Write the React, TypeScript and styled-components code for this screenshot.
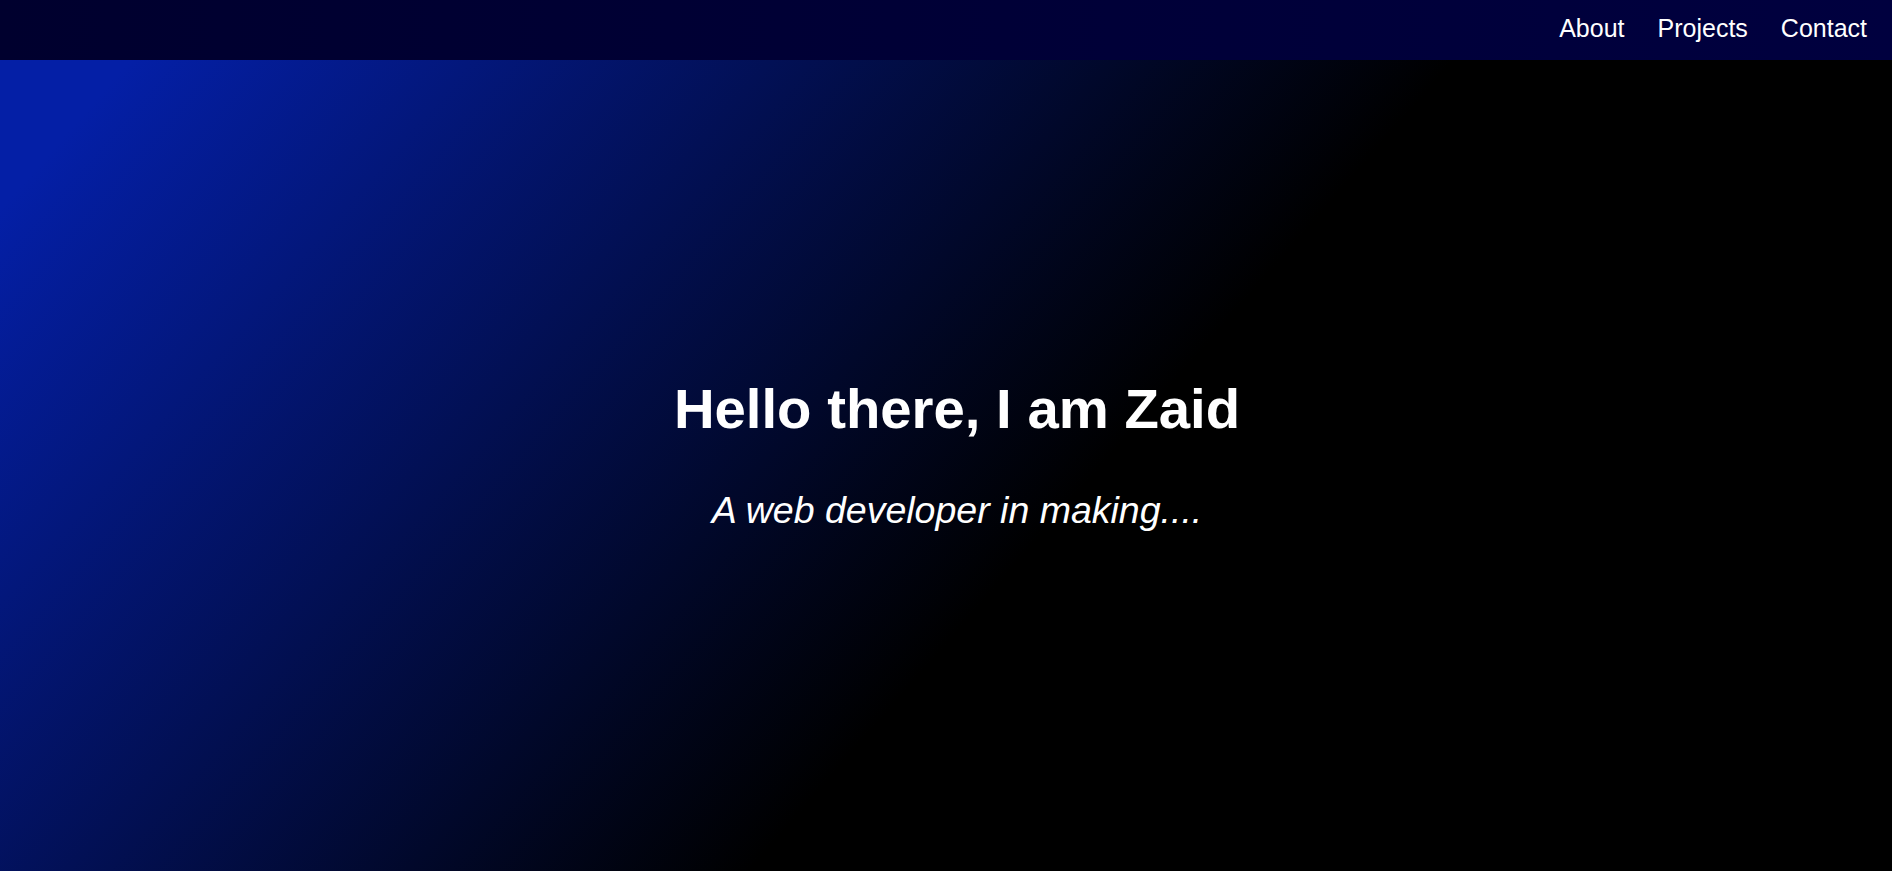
import React from "react";
import styled, { createGlobalStyle } from "styled-components";

const GlobalStyle = createGlobalStyle`
  html, body {
    margin: 0;
    padding: 0;
    height: 100%;
    background: #000;
  }
  body {
    font-family: "Liberation Sans", Arial, sans-serif;
    color: #fff;
  }
  #root {
    min-height: 100vh;
  }
`;

const Page = styled.div`
  display: flex;
  flex-direction: column;
  min-height: 100vh;
`;

const NavBar = styled.nav`
  display: flex;
  justify-content: flex-end;
  align-items: center;
  height: 60px;
  padding: 0 25px 4px 0;
  background: linear-gradient(to right, #00002e, #00003f);
  box-sizing: border-box;
  flex-shrink: 0;
`;

const NavList = styled.ul`
  display: flex;
  gap: 33px;
  list-style: none;
  margin: 0;
  padding: 0;
`;

const NavLink = styled.a`
  font-size: 25px;
  color: #fff;
  text-decoration: none;
  cursor: pointer;
`;

const Hero = styled.main`
  flex: 1;
  display: flex;
  flex-direction: column;
  align-items: center;
  justify-content: center;
  padding: 0 0 24px 22px;
  background: linear-gradient(131deg, #041fa6 5%, #000 56%);
`;

const Title = styled.h1`
  margin: 0;
  font-size: 56.3px;
  font-weight: 700;
  line-height: normal;
`;

const Subtitle = styled.p`
  margin: 48px 0 0;
  font-size: 37.5px;
  font-style: italic;
  line-height: normal;
`;

export default function App() {
  return (
    <Page>
      <GlobalStyle />
      <NavBar>
        <NavList>
          <li><NavLink>About</NavLink></li>
          <li><NavLink>Projects</NavLink></li>
          <li><NavLink>Contact</NavLink></li>
        </NavList>
      </NavBar>
      <Hero>
        <Title>Hello there, I am Zaid</Title>
        <Subtitle>A web developer in making....</Subtitle>
      </Hero>
    </Page>
  );
}
